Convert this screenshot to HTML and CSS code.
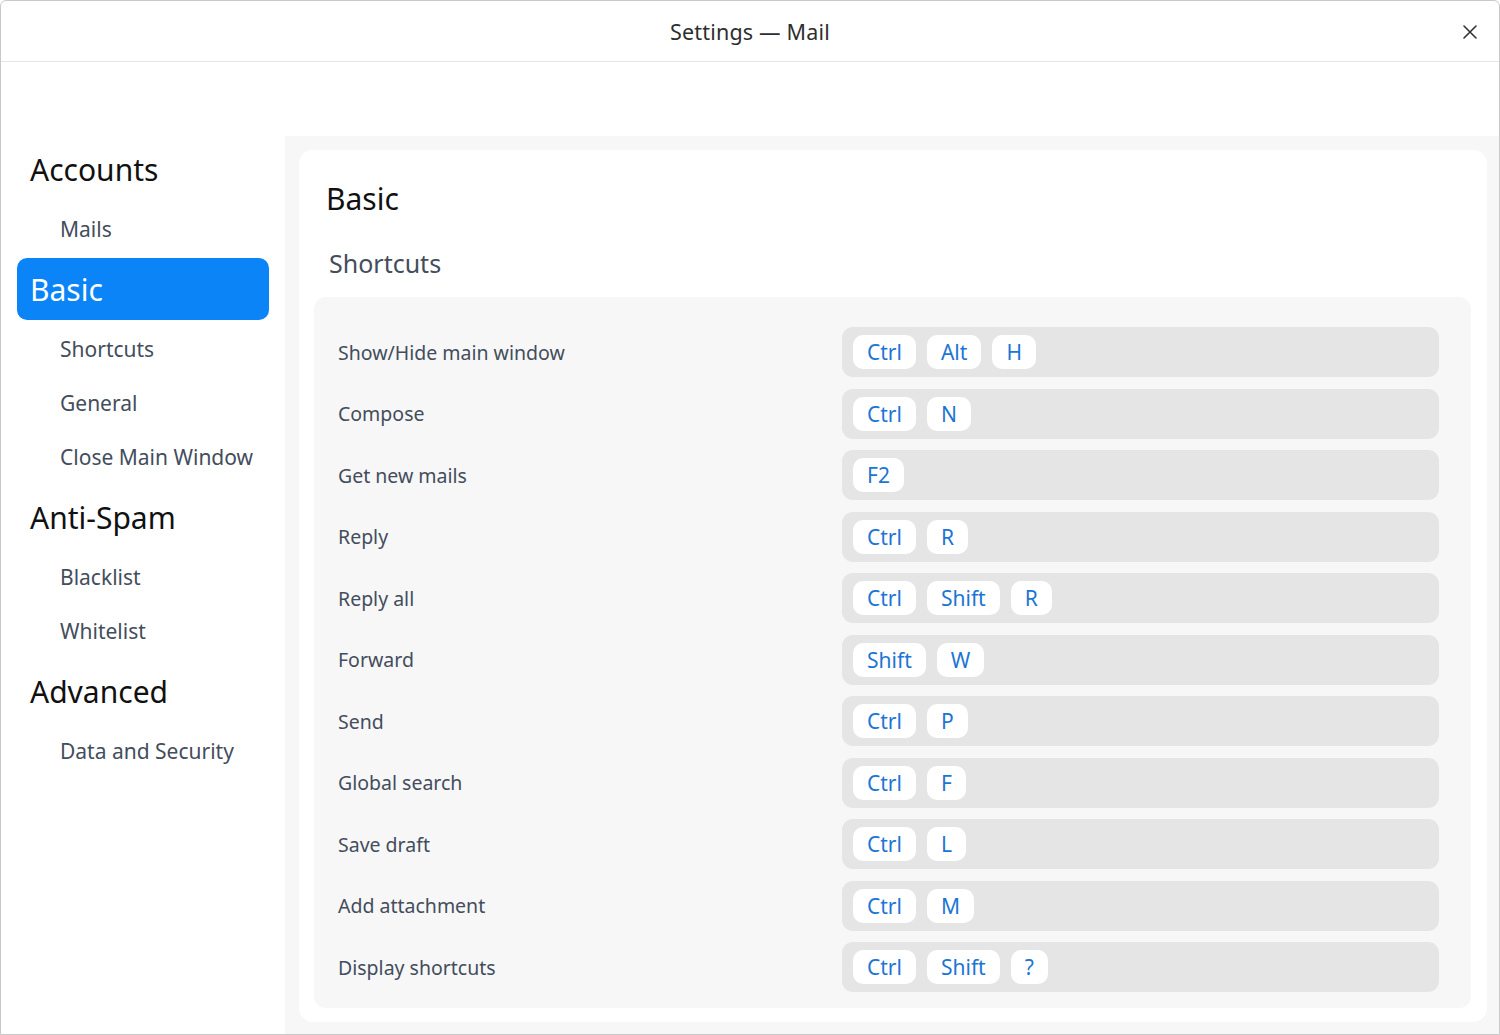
FILE: index.html
```html
<!DOCTYPE html>
<html>
<head>
<meta charset="utf-8">
<link rel="stylesheet" href="styles.css">
</head>
<body>
<div class="window">
  <header class="titlebar">
    <div class="title">Settings — Mail</div>
    <button class="close" aria-label="Close">
      <svg width="16" height="16" viewBox="0 0 16 16"><path d="M2 2 L14 14 M14 2 L2 14" stroke="#333" stroke-width="1.6" fill="none" stroke-linecap="round"/></svg>
    </button>
  </header>
  <div class="spacer"></div>
  <div class="main">
    <nav class="sidebar">
      <div class="nav-head">Accounts</div>
      <div class="nav-item">Mails</div>
      <div class="nav-head active">Basic</div>
      <div class="nav-item">Shortcuts</div>
      <div class="nav-item">General</div>
      <div class="nav-item">Close Main Window</div>
      <div class="nav-head">Anti-Spam</div>
      <div class="nav-item">Blacklist</div>
      <div class="nav-item">Whitelist</div>
      <div class="nav-head">Advanced</div>
      <div class="nav-item">Data and Security</div>
    </nav>
    <section class="content">
      <div class="card">
        <h1 class="page-title">Basic</h1>
        <h2 class="section-title">Shortcuts</h2>
        <div class="list">
          <div class="row"><span class="label">Show/Hide main window</span><div class="keys"><span class="key">Ctrl</span><span class="key">Alt</span><span class="key">H</span></div></div>
          <div class="row"><span class="label">Compose</span><div class="keys"><span class="key">Ctrl</span><span class="key">N</span></div></div>
          <div class="row"><span class="label">Get new mails</span><div class="keys"><span class="key">F2</span></div></div>
          <div class="row"><span class="label">Reply</span><div class="keys"><span class="key">Ctrl</span><span class="key">R</span></div></div>
          <div class="row"><span class="label">Reply all</span><div class="keys"><span class="key">Ctrl</span><span class="key">Shift</span><span class="key">R</span></div></div>
          <div class="row"><span class="label">Forward</span><div class="keys"><span class="key">Shift</span><span class="key">W</span></div></div>
          <div class="row"><span class="label">Send</span><div class="keys"><span class="key">Ctrl</span><span class="key">P</span></div></div>
          <div class="row"><span class="label">Global search</span><div class="keys"><span class="key">Ctrl</span><span class="key">F</span></div></div>
          <div class="row"><span class="label">Save draft</span><div class="keys"><span class="key">Ctrl</span><span class="key">L</span></div></div>
          <div class="row"><span class="label">Add attachment</span><div class="keys"><span class="key">Ctrl</span><span class="key">M</span></div></div>
          <div class="row"><span class="label">Display shortcuts</span><div class="keys"><span class="key">Ctrl</span><span class="key">Shift</span><span class="key">?</span></div></div>
        </div>
      </div>
    </section>
  </div>
</div>
</body>
</html>
```

FILE: styles.css
```css
* { box-sizing: border-box; }
html, body { margin: 0; padding: 0; }
body {
  width: 1500px;
  height: 1035px;
  overflow: hidden;
  background: #ffffff;
  font-family: "Noto Sans", "Open Sans", sans-serif;
}
.window {
  width: 1500px;
  height: 1035px;
  border: 1px solid #c9c9c9;
  border-radius: 6px 6px 0 0;
  display: flex;
  flex-direction: column;
  background: #fff;
  overflow: hidden;
}
.titlebar {
  height: 61px;
  flex: none;
  display: flex;
  align-items: center;
  justify-content: center;
  position: relative;
  border-bottom: 1px solid #e6e6e6;
}
.title {
  font-size: 21.5px;
  color: #2e2e2e;
  letter-spacing: 0.2px;
}
.close {
  position: absolute;
  right: 20px;
  top: 22px;
  width: 18px;
  height: 18px;
  padding: 0;
  border: none;
  background: none;
  display: flex;
  align-items: center;
  justify-content: center;
}
.spacer {
  height: 74px;
  flex: none;
}
.main {
  flex: 1;
  display: flex;
  min-height: 0;
}
.sidebar {
  width: 284px;
  flex: none;
  padding: 0 16px;
  display: flex;
  flex-direction: column;
}
.nav-head {
  height: 62px;
  margin: 2px 0;
  display: flex;
  align-items: center;
  padding-left: 13px;
  font-size: 30px;
  color: #111;
  border-radius: 10px;
}
.nav-head.active {
  background: #0b84f8;
  color: #fff;
}
.nav-item {
  height: 54px;
  display: flex;
  align-items: center;
  padding-left: 43px;
  font-size: 21px;
  color: #434d5c;
}
.content {
  flex: 1;
  background: #f7f7f7;
  padding: 14px 12px 12px 14px;
  display: flex;
}
.card {
  flex: 1;
  background: #fff;
  border-radius: 14px;
  padding: 28px 16px 14px 15px;
  display: flex;
  flex-direction: column;
}
.page-title {
  margin: 0 0 0 12px;
  font-size: 30px;
  font-weight: 400;
  color: #111;
  line-height: 42px;
}
.section-title {
  margin: 26px 0 17px 15px;
  font-size: 25px;
  font-weight: 400;
  color: #434d5c;
  line-height: 34px;
}
.list {
  background: #f7f7f7;
  border-radius: 12px;
  padding: 30px 32px 16px 24px;
  display: flex;
  flex-direction: column;
  gap: 11.5px;
}
.row {
  display: flex;
  align-items: center;
  height: 50px;
}
.label {
  width: 504px;
  flex: none;
  font-size: 19.5px;
  color: #434d5c;
}
.keys {
  flex: 1;
  height: 50px;
  background: #e5e5e5;
  border-radius: 11px;
  display: flex;
  align-items: center;
  gap: 11px;
  padding-left: 11px;
}
.key {
  height: 34px;
  display: flex;
  align-items: center;
  padding: 0 14px;
  background: #fff;
  border-radius: 10px;
  font-size: 21px;
  color: #1c75d5;
}
```
